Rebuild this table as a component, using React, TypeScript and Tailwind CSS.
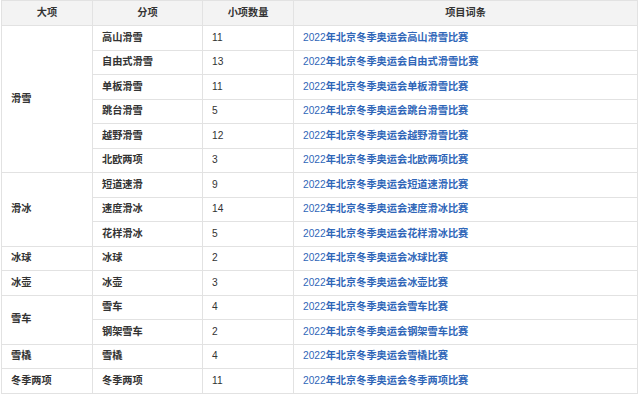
import React from "react";

type Fen = { name: string; count: number };
type Da = { name: string; items: Fen[] };

const data: Da[] = [
  {
    name: "滑雪",
    items: [
      { name: "高山滑雪", count: 11 },
      { name: "自由式滑雪", count: 13 },
      { name: "单板滑雪", count: 11 },
      { name: "跳台滑雪", count: 5 },
      { name: "越野滑雪", count: 12 },
      { name: "北欧两项", count: 3 },
    ],
  },
  {
    name: "滑冰",
    items: [
      { name: "短道速滑", count: 9 },
      { name: "速度滑冰", count: 14 },
      { name: "花样滑冰", count: 5 },
    ],
  },
  { name: "冰球", items: [{ name: "冰球", count: 2 }] },
  { name: "冰壶", items: [{ name: "冰壶", count: 3 }] },
  {
    name: "雪车",
    items: [
      { name: "雪车", count: 4 },
      { name: "钢架雪车", count: 2 },
    ],
  },
  { name: "雪橇", items: [{ name: "雪橇", count: 4 }] },
  { name: "冬季两项", items: [{ name: "冬季两项", count: 11 }] },
];

const cell = "border border-[#e2e2e2] px-[9px] align-middle";

export default function App() {
  return (
    <div
      className="w-[640px] h-[397px] bg-white overflow-hidden"
      style={{ fontFamily: '"Liberation Sans", "Noto Sans CJK SC", sans-serif' }}
    >
      <table className="ml-px border-collapse text-[10.2px] leading-none text-[#333] table-fixed w-[637px]">
        <colgroup>
          <col className="w-[91px]" />
          <col className="w-[110px]" />
          <col className="w-[91px]" />
          <col />
        </colgroup>
        <thead>
          <tr className="h-[25px] bg-[#f3f3f3]">
            <th className={`${cell} font-bold text-center`}>大项</th>
            <th className={`${cell} font-bold text-center`}>分项</th>
            <th className={`${cell} font-bold text-center`}>小项数量</th>
            <th className={`${cell} font-bold text-center`}>项目词条</th>
          </tr>
        </thead>
        <tbody>
          {data.map((d) =>
            d.items.map((f, i) => (
              <tr key={d.name + f.name} className="h-[24.5px]">
                {i === 0 && (
                  <td rowSpan={d.items.length} className={`${cell} font-bold`}>
                    {d.name}
                  </td>
                )}
                <td className={`${cell} font-bold`}>{f.name}</td>
                <td className={cell}>{f.count}</td>
                <td className={`${cell} text-[#2f66b8]`}>
                  2022<span className="font-bold">年北京冬季奥运会{f.name}比赛</span>
                </td>
              </tr>
            ))
          )}
        </tbody>
      </table>
    </div>
  );
}
